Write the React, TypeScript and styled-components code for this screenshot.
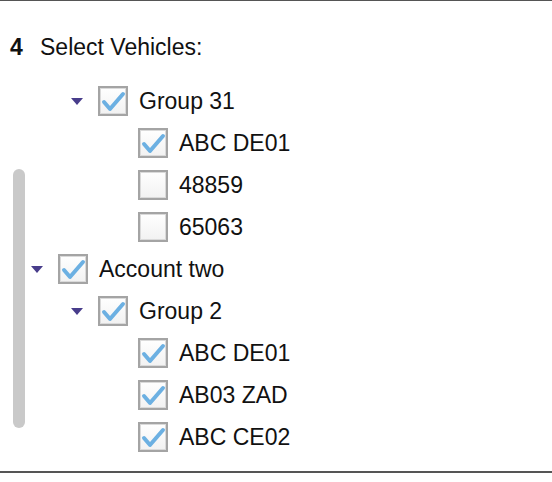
import styled, {createGlobalStyle} from 'styled-components'

const GlobalStyle = createGlobalStyle`
  body {
    margin: 0;
    background: white;
    font-family: "Liberation Sans", Arial, sans-serif;
  }
`

const Panel = styled.div`
  height: 470px;
  border-top: 1px solid #555;
  border-bottom: 2px solid #555;
  background: white;
`

const Heading = styled.div`
  display: flex;
  align-items: center;
  height: 26px;
  margin-top: 33px;
  padding-left: 10px;
  font-size: 23px;
  color: #111;
`

const StepNumber = styled.span`
  font-weight: bold;
  width: 30px;
`

const Tree = styled.div`
  position: relative;
  height: 380px;
  margin-top: 20px;
  overflow: hidden;
`

const Thumb = styled.div`
  position: absolute;
  left: 13px;
  top: 89px;
  width: 12px;
  height: 259px;
  border-radius: 6px;
  background: #c9c9c9;
`

const Row = styled.div<{$level: number}>`
  display: flex;
  align-items: center;
  height: 42px;
  padding-left: ${p => 31 + p.$level * 40}px;
`

const Toggle = styled.span<{$hidden?: boolean}>`
  width: 0;
  height: 0;
  margin-right: 15px;
  border-left: 6px solid transparent;
  border-right: 6px solid transparent;
  border-top: 7px solid ${p => (p.$hidden ? 'transparent' : '#483d8b')};
`

const Box = styled.span`
  box-sizing: border-box;
  display: flex;
  align-items: center;
  justify-content: center;
  width: 30px;
  height: 30px;
  margin-right: 11px;
  border: 2px solid #a4a4a4;
  box-shadow: inset 0 0 0 1px #dadada;
  background: linear-gradient(#ffffff, #f2f2f2);
`

const Label = styled.span`
  font-size: 23px;
  color: #111;
`

const Check = () => (
  <svg width="26" height="26" viewBox="0 0 26 26">
    <path
      d="M4 14 L10 21 L23 6"
      fill="none"
      stroke="#6cb0e2"
      strokeWidth="4"
      strokeLinecap="round"
      strokeLinejoin="round"
    />
  </svg>
)

type Item = {label: string; level: number; checked: boolean; toggle: boolean}

const items: Item[] = [
  {label: 'Group 31', level: 1, checked: true, toggle: true},
  {label: 'ABC DE01', level: 2, checked: true, toggle: false},
  {label: '48859', level: 2, checked: false, toggle: false},
  {label: '65063', level: 2, checked: false, toggle: false},
  {label: 'Account two', level: 0, checked: true, toggle: true},
  {label: 'Group 2', level: 1, checked: true, toggle: true},
  {label: 'ABC DE01', level: 2, checked: true, toggle: false},
  {label: 'AB03 ZAD', level: 2, checked: true, toggle: false},
  {label: 'ABC CE02', level: 2, checked: true, toggle: false},
]

const App = () => (
  <>
    <GlobalStyle />
    <Panel>
      <Heading>
        <StepNumber>4</StepNumber>
        <span>Select Vehicles:</span>
      </Heading>
      <Tree>
        {items.map((item, i) => (
          <Row key={i} $level={item.level}>
            <Toggle $hidden={!item.toggle} />
            <Box>{item.checked && <Check />}</Box>
            <Label>{item.label}</Label>
          </Row>
        ))}
        <Thumb />
      </Tree>
    </Panel>
  </>
)

export default App
